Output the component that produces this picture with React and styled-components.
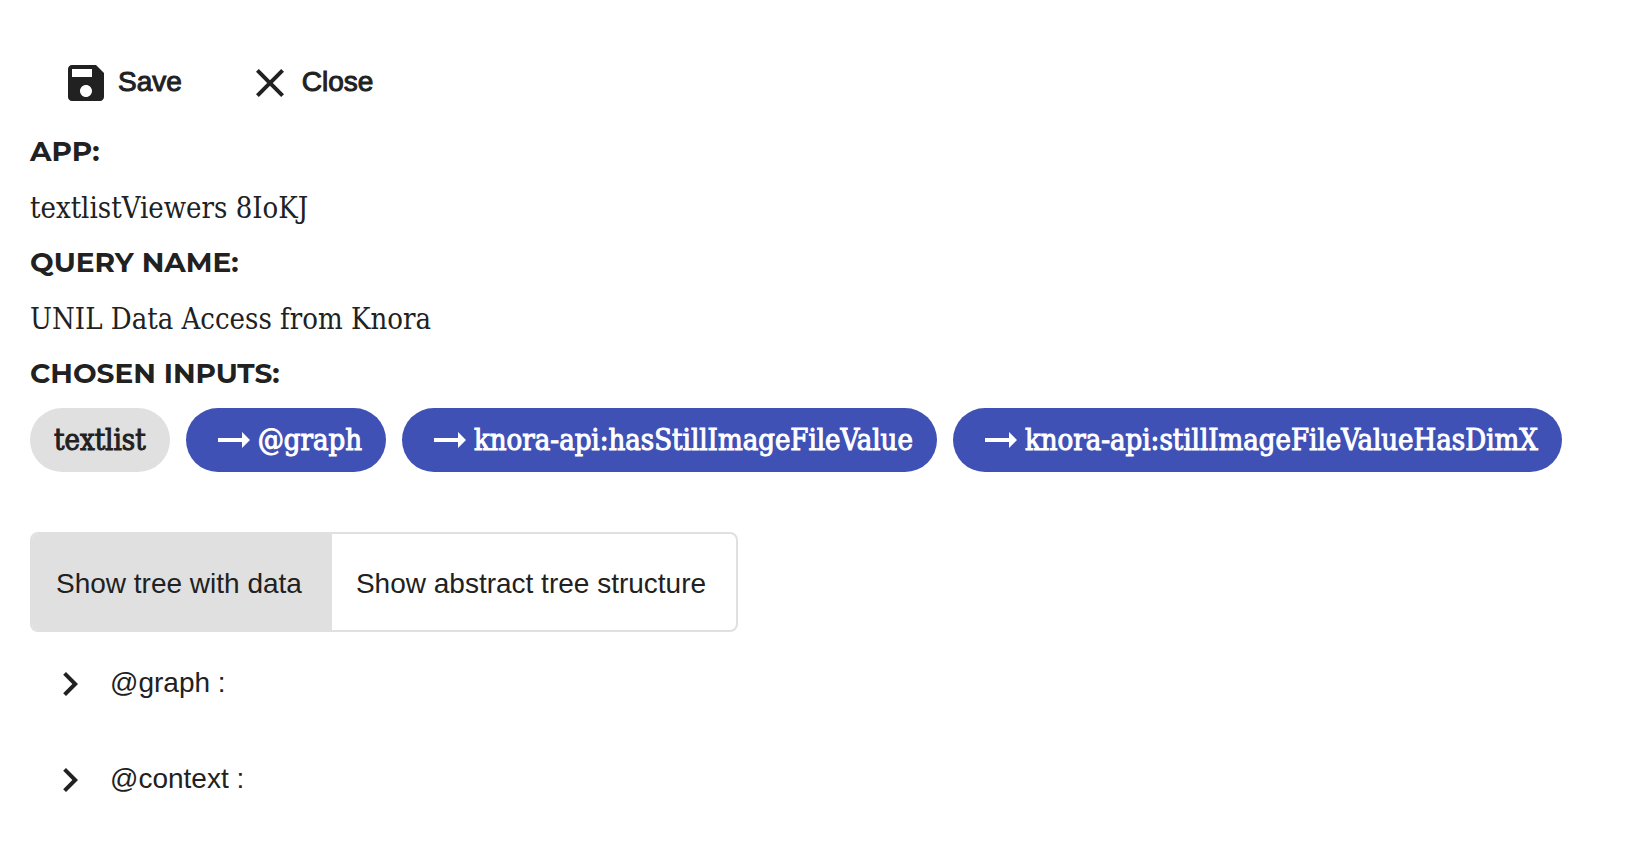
import React, { useState } from "react";
import styled, { createGlobalStyle } from "styled-components";

const GlobalStyle = createGlobalStyle`
  * { box-sizing: border-box; }
  body {
    margin: 0;
    background: #fff;
    color: #212121;
    font-family: "Liberation Sans", Arial, sans-serif;
    font-size: 28px;
  }
  button { font: inherit; color: inherit; background: none; border: 0; cursor: pointer; }
`;

const slab = `"Roboto Slab", "DejaVu Serif Condensed", "DejaVu Serif", serif`;

const Page = styled.main`
  padding: 47px 30px;
`;

const Toolbar = styled.div`
  display: flex;
  margin-bottom: 4px;
`;

const ToolButton = styled.button`
  display: flex;
  align-items: center;
  gap: 8px;
  height: 72px;
  padding: 0 32px;
  font-weight: 500;
  -webkit-text-stroke: 1px currentColor;
`;

const ToolLabel = styled.span`
  padding-bottom: 2px;
`;

const Icon = styled.svg`
  flex: none;
  width: 48px;
  height: 48px;
  fill: currentColor;
  stroke: none;
`;

const Details = styled.dl`
  margin: 0;
`;

const Term = styled.dt`
  font-family: Montserrat, Inter, sans-serif;
  font-weight: 700;
  line-height: 56px;
  text-transform: uppercase;
`;

const Value = styled.dd`
  margin: 0;
  padding-top: 3px;
  font-family: ${slab};
  font-size: 29px;
  line-height: 52px;
`;

const ChipList = styled.dd`
  display: flex;
  flex-wrap: wrap;
  gap: 16px;
  margin: 7px 0 60px;
`;

const Chip = styled.span`
  display: flex;
  align-items: center;
  height: 64px;
  padding: 0 24px;
  border-radius: 32px;
  font-family: ${slab};
  font-size: 29px;
  font-weight: 500;
  white-space: nowrap;
  -webkit-text-stroke: 1px currentColor;
  background: ${(p) => (p.$primary ? "#3f51b5" : "#e0e0e0")};
  color: ${(p) => (p.$primary ? "#fff" : "#212121")};
`;

const ToggleGroup = styled.div`
  display: flex;
  width: fit-content;
  overflow: hidden;
  border: 2px solid #e0e0e0;
  border-radius: 8px;
`;

const Toggle = styled.button`
  padding: 4px 30px 0 24px;
  line-height: 92px;
  white-space: nowrap;

  &[aria-pressed="true"] { background: #e0e0e0; }
`;

const Tree = styled.ul`
  margin: 4px 0 0;
  padding: 0;
  list-style: none;
`;

const TreeNode = styled.li`
  display: flex;
  align-items: center;
  height: 96px;
`;

const Expander = styled.button`
  display: flex;
  padding: 16px;
`;

const NodeLabel = styled.span`
  padding-bottom: 2px;
`;

const paths = {
  save: "M17 3H5c-1.11 0-2 .9-2 2v14c0 1.1.89 2 2 2h14c1.1 0 2-.9 2-2V7l-4-4zm-5 16c-1.66 0-3-1.34-3-3s1.34-3 3-3 3 1.34 3 3-1.34 3-3 3zm3-10H5V5h10v4z",
  close: "M19 6.41L17.59 5 12 10.59 6.41 5 5 6.41 10.59 12 5 17.59 6.41 19 12 13.41 17.59 19 19 17.59 13.41 12z",
  arrow: "M16.01 11H4v2h12.01v3L20 12l-3.99-4z",
  chevron: "M10 6L8.59 7.41 13.17 12l-4.58 4.59L10 18l6-6z",
};

const Glyph = ({ name }) => (
  <Icon viewBox="0 0 24 24" aria-hidden="true">
    <path d={paths[name]} />
  </Icon>
);

const inputs = ["@graph", "knora-api:hasStillImageFileValue", "knora-api:stillImageFileValueHasDimX"];
const views = ["Show tree with data", "Show abstract tree structure"];
const nodes = ["@graph", "@context"];

export default function App() {
  const [view, setView] = useState(views[0]);
  return (
    <Page>
      <GlobalStyle />
      <Toolbar>
        <ToolButton type="button"><Glyph name="save" /><ToolLabel>Save</ToolLabel></ToolButton>
        <ToolButton type="button"><Glyph name="close" /><ToolLabel>Close</ToolLabel></ToolButton>
      </Toolbar>
      <Details>
        <Term>App:</Term>
        <Value>textlistViewers 8IoKJ</Value>
        <Term>Query name:</Term>
        <Value>UNIL Data Access from Knora</Value>
        <Term>Chosen inputs:</Term>
        <ChipList>
          <Chip>textlist</Chip>
          {inputs.map((label) => (
            <Chip key={label} $primary><Glyph name="arrow" />{label}</Chip>
          ))}
        </ChipList>
      </Details>
      <ToggleGroup role="group" aria-label="Tree view">
        {views.map((label) => (
          <Toggle key={label} type="button" aria-pressed={view === label} onClick={() => setView(label)}>
            {label}
          </Toggle>
        ))}
      </ToggleGroup>
      <Tree>
        {nodes.map((label) => (
          <TreeNode key={label}>
            <Expander type="button" aria-label={`Expand ${label}`}><Glyph name="chevron" /></Expander>
            <NodeLabel>{label} :</NodeLabel>
          </TreeNode>
        ))}
      </Tree>
    </Page>
  );
}
